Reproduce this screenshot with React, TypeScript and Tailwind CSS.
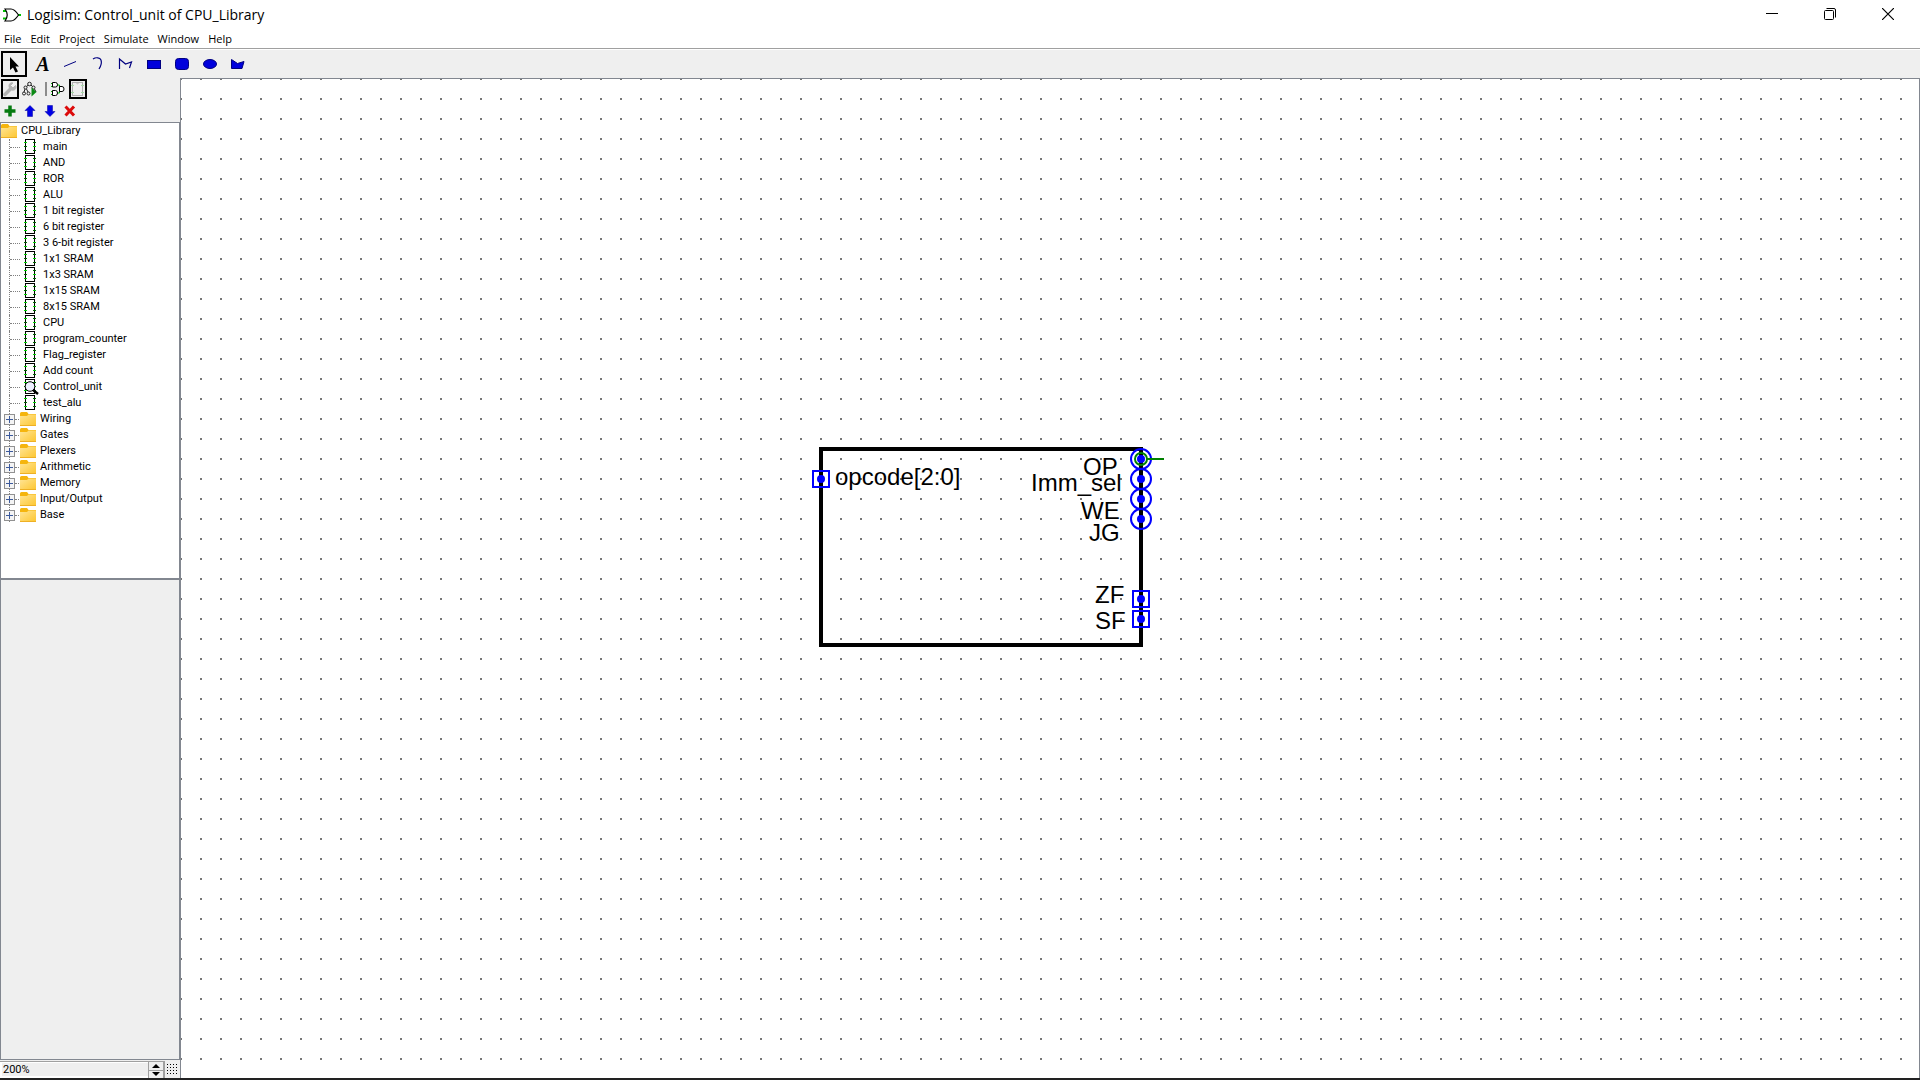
import React from "react";

const UI = "font-['Open_Sans','Noto_Sans',sans-serif]";
const TREE = "font-['Roboto','Noto_Sans',sans-serif]";

const circuits = [
  "main", "AND", "ROR", "ALU", "1 bit register", "6 bit register", "3 6-bit register",
  "1x1 SRAM", "1x3 SRAM", "1x15 SRAM", "8x15 SRAM", "CPU", "program_counter",
  "Flag_register", "Add count", "Control_unit", "test_alu",
];
const libraries = ["Wiring", "Gates", "Plexers", "Arithmetic", "Memory", "Input/Output", "Base"];

function GateIcon() {
  return (
    <svg width="18" height="14" viewBox="0 0 18 14" fill="none" aria-hidden="true">
      <path d="M0 3h4M0 10.500h4M15 7h3" stroke="#00c000" strokeWidth="2" />
      <path d="M2 1h6c3 0 5.500 3 7.500 6c-2 3-4.500 6-7.500 6H2c3-4 3-8 0-12z" fill="#fff" stroke="#000" strokeWidth="1.200" />
    </svg>
  );
}

function Folder() {
  return (
    <svg width="16" height="14" viewBox="0 0 16 14" className="shrink-0" aria-hidden="true">
      <defs>
        <linearGradient id="fold" x1="0" y1="0" x2="1" y2="1">
          <stop offset="0" stopColor="#ffe596" />
          <stop offset="1" stopColor="#fdc62f" />
        </linearGradient>
      </defs>
      <path d="M0 1.500q0-1.500 1.500-1.500H7l1.500 2H16v3H0z" fill="#f5b50e" />
      <path d="M0 4h7l1.500-1.500H16V14H0z" fill="url(#fold)" />
      <path d="M0 13.500h16" stroke="#eeb025" />
    </svg>
  );
}

function Chip({ active = false }: { active?: boolean }) {
  return (
    <svg width="16" height="16" viewBox="0 0 16 16" className="shrink-0" aria-hidden="true" shapeRendering="crispEdges">
      <rect x="1.500" y="0.500" width="9" height="14" fill="#fff" stroke="#000" />
      <path d="M0 3.500h3M0 11.500h3M9 7.500h3" stroke="#00d400" />
      <path d="M9 3.500h3M0 7.500h3M9 11.500h3" stroke="#006400" />
      {active && (
        <g shapeRendering="auto">
          <circle cx="6" cy="7.500" r="4.800" fill="#eef0ff" stroke="#000" />
          <path d="M9 11l5 4" stroke="#000" strokeWidth="2.500" />
        </g>
      )}
    </svg>
  );
}

const tools: { name: string; icon: React.ReactNode }[] = [
  { name: "Select", icon: <path d="M6 3v13l3-2.500 2.500 5 2.500-1-2.500-5H15z" fill="#000" /> },
  {
    name: "Text",
    icon: (
      <text x="11" y="17" textAnchor="middle" fontSize="20" fontWeight="bold" fontStyle="italic" fontFamily="Liberation Serif, serif">A</text>
    ),
  },
  { name: "Line", icon: <path d="M4 12.500L16 7.500" stroke="#000080" fill="none" /> },
  { name: "Curve", icon: <path d="M5 5c3-2 7-1.500 8 1c1 3 0 6-2 9" stroke="#000080" fill="none" strokeWidth="1.200" /> },
  { name: "Polyline", icon: <path d="M3.500 15V5l6 5 6-2-2 6" stroke="#000080" fill="none" strokeWidth="1.200" /> },
  { name: "Rectangle", icon: <rect x="3.500" y="6.500" width="13" height="8" fill="#0000dc" stroke="#000080" /> },
  { name: "Rounded rectangle", icon: <rect x="3.500" y="4.500" width="13" height="11" rx="3" fill="#0000dc" stroke="#000080" /> },
  { name: "Oval", icon: <ellipse cx="10" cy="10" rx="6.500" ry="4.500" fill="#0000dc" stroke="#000080" /> },
  { name: "Polygon", icon: <path d="M3.500 14.500v-9l6 4 6.500-2-2 7z" fill="#0000dc" stroke="#000080" /> },
];

const ports = [
  { x: 640, y: 400, round: false },
  { x: 960, y: 380, round: true },
  { x: 960, y: 400, round: true },
  { x: 960, y: 420, round: true },
  { x: 960, y: 440, round: true },
  { x: 960, y: 520, round: false },
  { x: 960, y: 540, round: false },
];

const labels = [
  { t: "opcode[2:0]", x: 654, y: 406 },
  { t: "OP", x: 902, y: 396 },
  { t: "Imm_sel", x: 850, y: 412 },
  { t: "WE", x: 900, y: 440 },
  { t: "JG", x: 908, y: 462 },
  { t: "ZF", x: 914, y: 524 },
  { t: "SF", x: 914, y: 550 },
];

function Drawing() {
  return (
    <svg className="block h-full w-full" role="img" aria-label="Control_unit appearance">
      <defs>
        <pattern id="grid" x="-1" y="-1" width="20" height="20" patternUnits="userSpaceOnUse">
          <rect width="2" height="2" fill="#777" />
        </pattern>
      </defs>
      <rect width="100%" height="100%" fill="url(#grid)" />
      <rect x="640" y="370" width="320" height="196" fill="none" stroke="#000" strokeWidth="4" />
      {labels.map((l) => (
        <text key={l.t} x={l.x} y={l.y} fontSize="24" fontFamily="Liberation Sans, sans-serif">{l.t}</text>
      ))}
      {ports.map((p) => (
        <g key={`${p.x}-${p.y}`} fill="none" stroke="#00f" strokeWidth="2">
          {p.round ? <circle cx={p.x} cy={p.y} r="10" /> : <rect x={p.x - 8} y={p.y - 8} width="16" height="16" />}
          <circle cx={p.x} cy={p.y} r="4" fill="#00f" stroke="none" />
        </g>
      ))}
      <circle cx="960" cy="380" r="6" fill="none" stroke="#008000" strokeWidth="2" />
      <path d="M966 380h17" stroke="#008000" strokeWidth="2" />
    </svg>
  );
}

export default function App() {
  return (
    <div className={`flex h-screen flex-col overflow-hidden bg-[#efefef] text-black ${UI}`}>
      <header className="flex h-[30px] shrink-0 items-center bg-white pl-[3px] pr-[3px]">
        <GateIcon />
        <h1 className="ml-1.5 text-[14px] leading-7">Logisim: Control_unit of CPU_Library</h1>
        <div className="ml-auto flex h-7 self-start">
          <button aria-label="Minimize" className="flex w-[58px] items-center justify-center">
            <svg width="12" height="12" viewBox="0 0 12 12"><path d="M0 5.500h12" stroke="#000" /></svg>
          </button>
          <button aria-label="Restore" className="flex w-[58px] items-center justify-center">
            <svg width="12" height="12" viewBox="0 0 12 12" fill="none" stroke="#000">
              <rect x="0.500" y="2.500" width="9" height="9" rx="1" />
              <path d="M2.500 0.500h7.500q1.500 0 1.500 1.500v7.500" />
            </svg>
          </button>
          <button aria-label="Close" className="flex w-[58px] items-center justify-center">
            <svg width="12" height="12" viewBox="0 0 12 12"><path d="M0 0l12 12M12 0L0 12" stroke="#000" strokeWidth="1.200" /></svg>
          </button>
        </div>
      </header>

      <nav className="flex h-[19px] shrink-0 items-center gap-[9px] border-b border-[#a0a0a0] bg-white pl-1 text-[11px] leading-4">
        {["File", "Edit", "Project", "Simulate", "Window", "Help"].map((m) => (
          <button key={m}>{m}</button>
        ))}
      </nav>

      <div className="flex h-[29px] shrink-0 items-center gap-0.5 border-t border-white pl-px" role="toolbar" aria-label="Drawing tools">
        {tools.map((t, i) => (
          <button
            key={t.name}
            aria-label={t.name}
            className={i === 0 ? "flex size-[26px] items-center justify-center border-2 border-black" : "flex size-[26px] items-center justify-center"}
          >
            <svg width="20" height="20" viewBox="0 0 20 20" className="shrink-0">{t.icon}</svg>
          </button>
        ))}
      </div>

      <div className="flex min-h-0 flex-1">
        <aside className="flex w-[180px] shrink-0 flex-col">
          <div className="flex h-[22px] shrink-0 items-center pl-px">
            <button aria-label="Show toolbox" className="flex h-5 w-[18px] items-center justify-center border-2 border-black">
              <svg width="14" height="16" viewBox="0 0 14 16" fill="none" className="shrink-0">
                <path d="M2 13.500L8 7.500" stroke="#b4b4b4" strokeWidth="3.500" strokeLinecap="round" />
                <path d="M12.500 4.500L10 7L7.500 4.500L10 2C7 1 5 4 6.500 7l2 2c3 1 5.500-1.500 4-4.500z" fill="#b4b4b4" stroke="#b4b4b4" />
              </svg>
            </button>
            <button aria-label="Show simulation tree" className="ml-[3px] flex h-5 w-4 items-center justify-center">
              <svg width="16" height="16" viewBox="0 0 16 16" fill="none" stroke="#222" className="shrink-0">
                <circle cx="7.500" cy="3" r="1.800" />
                <circle cx="3.500" cy="6.500" r="1.500" />
                <circle cx="2" cy="12.500" r="1.500" />
                <circle cx="6.500" cy="12.500" r="1.500" />
                <circle cx="11.500" cy="6.500" r="1.500" />
                <path d="M6 4L5 5.500M9 4l1.500 1.500M3 8l-1 3M4.500 8l1.500 3M12.500 8l1.500 3" />
                <path d="M9.500 6.500v9l5-4.500z" fill="#0a8a14" stroke="none" />
              </svg>
            </button>
            <span className="ml-[7px] h-3.5 w-0.5 bg-[#8c8c8c]" />
            <button aria-label="Edit circuit layout" className="ml-1 flex h-5 w-3.5 items-center justify-center">
              <svg width="14" height="16" viewBox="0 0 14 16" fill="none" className="shrink-0">
                <path d="M0 2.500h2M0 5.500h2M0 10.500h2M0 13.500h2M6 4h2.500v3H10M6 12h2.500V9H10" stroke="#00b400" />
                <path d="M1.500 1.500h3q2 0 2 2.300t-2 2.200h-3zM1.500 9.500h3q2 0 2 2.500t-2 2.500h-3z" fill="#fff" stroke="#000" />
                <path d="M8.500 5.500H11q2 0 2 2.500t-2 2.500H8.500z" fill="#fff" stroke="#000" />
              </svg>
            </button>
            <button aria-label="Edit circuit appearance" className="ml-1 flex h-5 w-[18px] items-center justify-center border-2 border-black">
              <svg width="14" height="16" viewBox="0 0 14 16" fill="none" className="shrink-0">
                <rect x="1.500" y="1.500" width="10" height="13" stroke="#b0b0b0" />
                <path d="M5 1.500q1.500 2.500 3 0" stroke="#b0b0b0" />
                <path d="M0 4.500h3M0 11.500h3M10 4.500h3M10 11.500h3" stroke="#a6dca6" />
              </svg>
            </button>
          </div>

          <div className="flex h-[22px] shrink-0 items-center">
            <button aria-label="Add circuit" className="flex w-5 justify-center">
              <svg width="12" height="12" viewBox="0 0 12 12"><path d="M6 .5v11M.5 6h11" stroke="#067a10" strokeWidth="3.500" /></svg>
            </button>
            <button aria-label="Move up" className="flex w-5 justify-center">
              <svg width="12" height="12" viewBox="0 0 12 12"><path d="M6 .5l5 5H8.500v6h-5v-6H1z" fill="#0000e6" stroke="#0000a0" strokeWidth=".5" /></svg>
            </button>
            <button aria-label="Move down" className="flex w-5 justify-center">
              <svg width="12" height="12" viewBox="0 0 12 12"><path d="M6 11.500l5-5H8.500v-6h-5v6H1z" fill="#0000e6" stroke="#0000a0" strokeWidth=".5" /></svg>
            </button>
            <button aria-label="Remove circuit" className="flex w-5 justify-center">
              <svg width="12" height="12" viewBox="0 0 12 12"><path d="M1.500 1.500l8.500 9M10 1.500l-8.500 9" stroke="#dc0a0a" strokeWidth="3" /></svg>
            </button>
          </div>

          <div className={`min-h-0 flex-[457] overflow-hidden border border-[#828790] bg-white text-[11px] leading-4 ${TREE}`}>
            <div className="flex h-4 items-center gap-1">
              <Folder />
              <span>CPU_Library</span>
            </div>
            <ul>
              {circuits.map((c) => (
                <li key={c} className="flex h-4 items-center pl-2">
                  <span className="flex h-4 w-[11px] items-center border-l border-dotted border-[#808080]">
                    <span className="w-full border-t border-dotted border-[#808080]" />
                  </span>
                  <span className="ml-1 flex"><Chip active={c === "Control_unit"} /></span>
                  <span className="ml-[3px]">{c}</span>
                </li>
              ))}
              {libraries.map((l) => (
                <li key={l} className="flex h-4 items-center pl-[3px]">
                  <button aria-label={`Expand ${l}`} className="flex">
                    <svg width="11" height="16" viewBox="0 0 11 16" shapeRendering="crispEdges">
                      <path d="M5.500 0v16" stroke="#808080" strokeDasharray="1 1" />
                      <rect x="0.500" y="3.500" width="10" height="10" fill="#f4f4f4" stroke="#919191" />
                      <path d="M2 8.500h7M5.500 5v7" stroke="#3c5a9c" />
                    </svg>
                  </button>
                  <span className="mr-px w-1 border-t border-dotted border-[#808080]" />
                  <Folder />
                  <span className="ml-1">{l}</span>
                </li>
              ))}
            </ul>
          </div>

          <div className="min-h-0 flex-[481] border border-[#828790]" />

          <div className="flex h-[18px] shrink-0 items-center pt-px">
            <div className="flex h-full flex-1 border-r border-t border-[#a0a0a0] bg-white pl-0.5">
              <input
                aria-label="Zoom"
                defaultValue="200%"
                className={`mt-px h-[13px] w-0 flex-1 bg-[#efefef] pl-px text-[11px] leading-[13px] outline-none ${TREE}`}
              />
              <div className="flex w-4 flex-col border-x border-[#a0a0a0] bg-[#efefef]">
                <button aria-label="Zoom in" className="flex flex-1 items-center justify-center">
                  <svg width="8" height="4" viewBox="0 0 8 4"><path d="M4 0l4 4H0z" /></svg>
                </button>
                <button aria-label="Zoom out" className="flex flex-1 items-center justify-center border-t border-[#a0a0a0]">
                  <svg width="8" height="4" viewBox="0 0 8 4"><path d="M0 0h8L4 4z" /></svg>
                </button>
              </div>
            </div>
            <button aria-label="Toggle grid" className="flex w-[15px] justify-center">
              <svg width="11" height="11" viewBox="0 0 11 11" shapeRendering="crispEdges">
                {[0, 3, 6, 9].map((y) => (
                  <path key={y} d={`M0 ${y + 0.5}h11`} stroke="#000" strokeDasharray="1 2" />
                ))}
              </svg>
            </button>
          </div>
        </aside>

        <main className="min-w-0 flex-1 border-x border-t border-[#828790] bg-white">
          <Drawing />
        </main>
      </div>
      <footer className="h-0.5 shrink-0 bg-[#222222]" />
    </div>
  );
}
